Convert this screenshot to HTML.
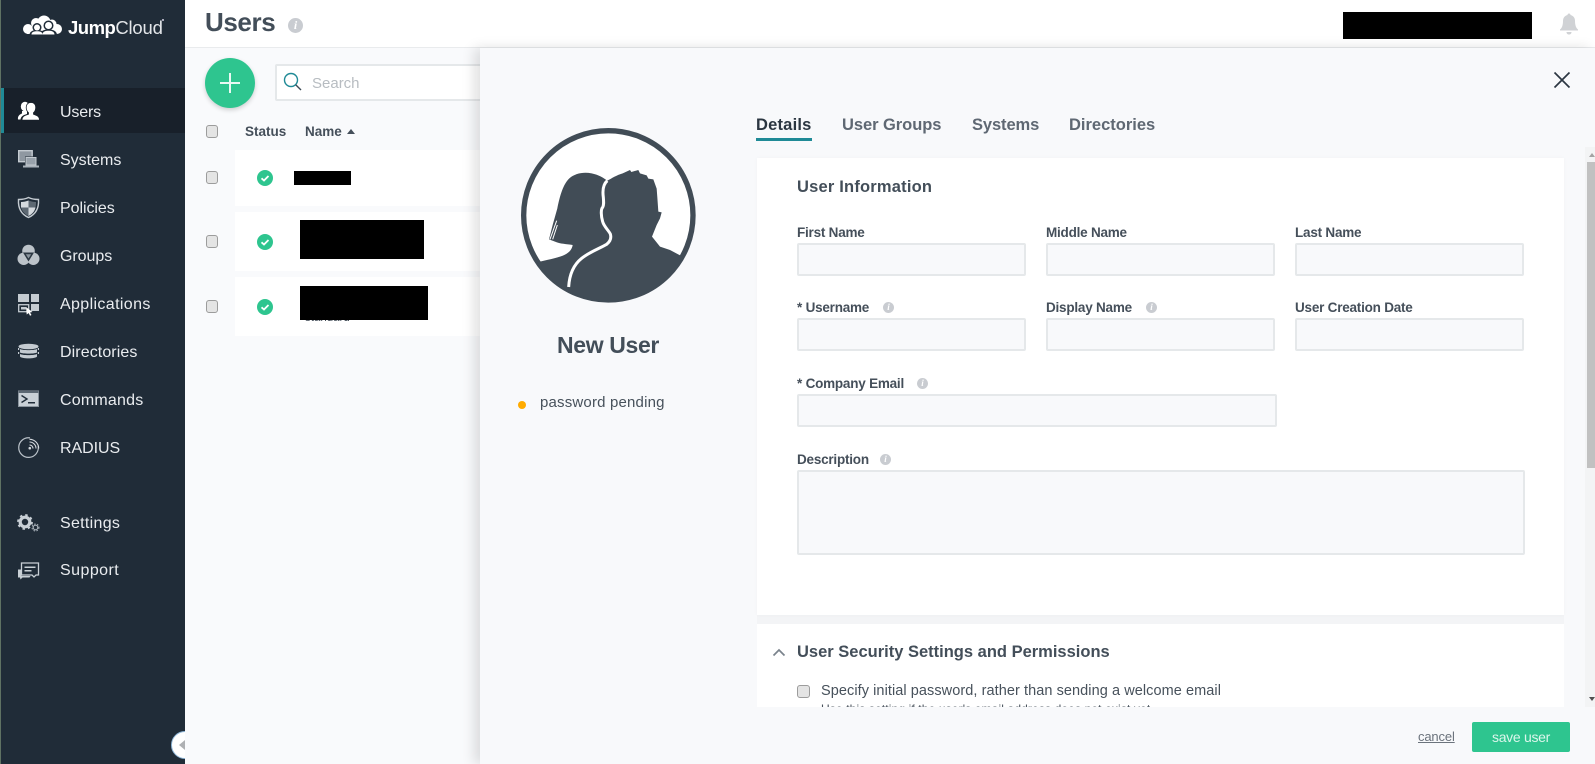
<!DOCTYPE html>
<html><head><meta charset="utf-8"><title>Users</title>
<style>
html,body{margin:0;padding:0;width:1595px;height:764px;overflow:hidden;background:#f9fafc;font-family:"Liberation Sans",sans-serif;color:#3f4a56}
.a{position:absolute}
.t{position:absolute;white-space:nowrap;line-height:20px}
.nav{left:60px;font-size:16px;color:#e9ecef}
.lbl{font-size:13.5px;font-weight:bold;color:#454f5a;letter-spacing:-.22px}
.inp{position:absolute;box-sizing:border-box;background:#f8f9fb;border:2px solid #e5e8ea;border-radius:2px}
.cb{position:absolute;box-sizing:border-box;width:12.500px;height:12.500px;background:#e4e4e4;border:1px solid #9c9c9c;border-radius:3px}
.row{position:absolute;left:235px;width:260px;background:#fff}
.bk{position:absolute;background:#000}
.tab{font-size:16.5px;font-weight:bold;color:#5f6873;top:115px}
.i{position:absolute;border-radius:50%;background:#c9ccd1;color:#fff;font:italic bold 9px/11px "Liberation Serif",serif;text-align:center;width:11px;height:11px}
</style></head><body>

<!-- Sidebar -->
<div class="a" style="left:0;top:0;width:185px;height:764px;background:#202c38"></div>
<div class="a" style="left:0;top:0;width:1px;height:764px;background:#5f7263"></div>
<div class="a" style="left:1px;top:88px;width:184px;height:45px;background:#18202a"></div>
<div class="a" style="left:1px;top:88px;width:3px;height:45px;background:#1f8a96"></div>

<svg class="a" style="left:0;top:0" width="185" height="764" viewBox="0 0 185 764">
  <!-- logo cloud -->
  <g fill="#fff">
    <circle cx="28" cy="29" r="5"/>
    <circle cx="36" cy="23" r="5"/>
    <circle cx="44" cy="22" r="6.500"/>
    <circle cx="52" cy="24" r="4.500"/>
    <circle cx="57" cy="29" r="5"/>
    <rect x="27" y="26" width="30" height="8"/>
  </g>
  <g fill="#202c38">
    <circle cx="37" cy="27.500" r="4.500"/><circle cx="48.500" cy="25.500" r="5"/>
    <path d="M29.500 35c0-3.500 3.500-5 7.500-5s7.500 1.500 7.500 5zM40 35c0-4 4-5.500 8.500-5.500S57 31 57 35z"/>
  </g>
  <g fill="#fff">
    <circle cx="37" cy="27.500" r="3"/><circle cx="48.500" cy="25.500" r="3.500"/>
    <path d="M31.500 34.500c0-2.500 2.500-3.200 5.500-3.200s5.500.7 5.500 3.200zM42.500 34.500c0-2.800 3-3.700 6-3.700s6 .9 6 3.700z"/>
  </g>
  <!-- users -->
  <ellipse cx="25" cy="106.500" rx="4.200" ry="4.700" fill="#fff"/>
  <path fill="#fff" d="M22 111h5v3c-3 .8-6 2-6.500 5.500H18c-.5-3.500 1.500-5 4-6z"/>
  <path fill="#fff" stroke="#18202a" stroke-width=".8" d="M31 102.500c3 0 4.700 2 4.700 4.700 0 2.500-1 4.500-2.200 5.500v1.500c3 1 6 2 6 6H22c0-4 3-5 6.500-6v-1.500c-1.200-1-2.300-3-2.300-5.500 0-2.700 1.800-4.700 4.800-4.700z"/>
  <!-- systems -->
  <rect x="18.700" y="150.700" width="13.500" height="11" fill="#8f98a1" stroke="#c4cbd1" stroke-width="1.400"/>
  <rect x="25" y="156.500" width="12" height="9" fill="#202c38"/>
  <rect x="26" y="157.500" width="10" height="7.500" fill="#98a2ab" stroke="#c4cbd1" stroke-width="1"/>
  <rect x="23" y="165.500" width="16" height="2" fill="#aab3bb"/>
  <!-- policies -->
  <path d="M28.500 197.500c3 1.500 7 2 10 2 .5 8-2 14.500-10 18-8-3.500-10.500-10-10-18 3 0 7-.5 10-2z" fill="none" stroke="#c4cbd1" stroke-width="1.400"/>
  <path d="M28.500 200.500v7h-7.500c-.2-2 0-4 0-5.500 2.500 0 5-.5 7.500-1.500zM28.500 207.500h7c-.7 3.500-3 6.500-7 8.500z" fill="#d4d9dd"/>
  <path d="M28.500 200.500c2.500 1 5 1.500 7.500 1.500 0 1.500 0 3.500-.500 5.500h-7zM21 207.500h7.500v8.500c-4-2-6.500-5-7.500-8.500z" fill="#5d6872"/>
  <!-- groups -->
  <circle cx="28.500" cy="251" r="6.300" fill="#bcc3c9"/>
  <circle cx="23.700" cy="258.800" r="6.200" fill="#bcc3c9"/>
  <circle cx="33.300" cy="258.800" r="6.200" fill="#bcc3c9"/>
  <path d="M23 252.500h11l-5.500 9z" fill="#2b3742"/>
  <path d="M25.800 254.200h5.400l-2.700 4.300z" fill="#8b959e"/>
  <!-- applications -->
  <g fill="#c4cbd1">
    <rect x="18" y="294" width="11" height="8"/><rect x="31" y="294" width="8" height="8"/>
    <rect x="31" y="304" width="8" height="7"/>
  </g>
  <rect x="18.700" y="304.700" width="10" height="7" fill="none" stroke="#c4cbd1" stroke-width="1.300"/>
  <rect x="21" y="307" width="5" height="2.500" fill="#c4cbd1"/>
  <path d="M26 307l6.500 5-2.500.5 1.500 2.500-1.500.7-1.300-2.600-2 1.400z" fill="#fff"/>
  <!-- directories -->
  <g fill="#c4cbd1">
    <ellipse cx="28.500" cy="346.500" rx="10" ry="2.800"/>
    <path d="M20 349c2.500 1.500 14.500 1.500 17 0v3.500c-2.500 1.500-14.500 1.500-17 0z"/>
    <path d="M20 354c2.500 1.500 14.500 1.500 17 0v2.500c-1.500 2.500-15.500 2.500-17 0z"/>
    <rect x="18" y="348" width="1.200" height="2"/><rect x="37.800" y="348" width="1.200" height="2"/>
    <rect x="18" y="352" width="1.200" height="2"/><rect x="37.800" y="352" width="1.200" height="2"/>
  </g>
  <!-- commands -->
  <rect x="18.500" y="391" width="20" height="15.500" fill="#c9d0d6" stroke="#8b959e" stroke-width="1"/>
  <rect x="18.500" y="391" width="20" height="2" fill="#5c6873"/>
  <path d="M21.500 395.500l5.500 3.500-5.500 3.500" fill="none" stroke="#202c38" stroke-width="1.400"/>
  <rect x="28" y="402" width="7" height="1.500" fill="#202c38"/>
  <!-- radius -->
  <path d="M30 437.900A9.800 9.800 0 1 0 38.200 446" fill="none" stroke="#b9c1c8" stroke-width="1.200"/>
  <g fill="none" stroke="#d5dadf" stroke-width="1.100">
    <path d="M29.500 445a3.500 3.500 0 0 1 3.500 3.500"/>
    <path d="M29.500 442a6.500 6.500 0 0 1 6.500 6.500"/>
    <path d="M29.500 439.300a9.200 9.200 0 0 1 9.200 9.200"/>
  </g>
  <circle cx="29.800" cy="448.200" r="1.300" fill="#d5dadf"/>
  <!-- settings -->
  <circle cx="25" cy="522" r="4.800" fill="none" stroke="#c9d0d6" stroke-width="3.200"/>
  <circle cx="25" cy="522" r="7" fill="none" stroke="#c9d0d6" stroke-width="1.800" stroke-dasharray="2.500 3"/>
  <circle cx="35.500" cy="527.500" r="2.300" fill="none" stroke="#a7b0b8" stroke-width="1.200"/>
  <circle cx="35.500" cy="527.500" r="3.500" fill="none" stroke="#a7b0b8" stroke-width="1" stroke-dasharray="1.500 1.500"/>
  <!-- support -->
  <g transform="translate(0 1)">
  <path d="M21.500 562h17v12h-2.500l-2 2-2-2h-10.500z" fill="none" stroke="#c9d0d6" stroke-width="1.300"/>
  <path d="M24.500 565.500h11v1.500h-11zM24.500 569h7v1.500h-7z" fill="#c9d0d6"/>
  <path d="M18 568.500h3.500v6.500h9l-1 1.500h-7l-2 2-.5-2h-2z" fill="#c9d0d6"/>
  </g>
</svg>

<div class="t" style="left:68px;top:17px;font-size:18.500px;line-height:22px;color:#fff;letter-spacing:-.2px"><span style="font-weight:bold;letter-spacing:-.5px">Jump</span><span style="color:#e3e6e9">Cloud</span></div>
<div class="a" style="left:162px;top:19px;width:1.500px;height:1.500px;background:#aab"></div>

<div class="t nav" style="top:103px;letter-spacing:-.15px">Users</div>
<div class="t nav" style="top:151px;letter-spacing:0">Systems</div>
<div class="t nav" style="top:199px;letter-spacing:-.05px">Policies</div>
<div class="t nav" style="top:247px;letter-spacing:-.05px">Groups</div>
<div class="t nav" style="top:295px;letter-spacing:.37px">Applications</div>
<div class="t nav" style="top:343px;letter-spacing:.09px">Directories</div>
<div class="t nav" style="top:391px;letter-spacing:.2px">Commands</div>
<div class="t nav" style="top:439px;letter-spacing:-.05px">RADIUS</div>
<div class="t nav" style="top:514px;letter-spacing:.3px">Settings</div>
<div class="t nav" style="top:561px;letter-spacing:.45px">Support</div>

<!-- collapse tab -->
<div class="a" style="left:171px;top:731px;width:14px;height:28px;overflow:hidden">
  <div class="a" style="left:0;top:0;width:28px;height:28px;box-sizing:border-box;border-radius:50%;background:#fff;border:1px solid #8fb7d8"></div>
  <div class="a" style="left:8px;top:9px;width:0;height:0;border-top:5px solid transparent;border-bottom:5px solid transparent;border-right:6px solid #aeb0b3"></div>
</div>

<!-- Header -->
<div class="a" style="left:185px;top:0;width:1410px;height:47px;background:#fff;border-bottom:1px solid #e9ebed"></div>
<div class="t" style="left:205px;top:6px;font-size:26px;line-height:32px;font-weight:bold;color:#434e59;letter-spacing:-.4px">Users</div>
<div class="i" style="left:288px;top:18px;width:15px;height:15px;font-size:12px;line-height:15px">i</div>
<div class="bk" style="left:1343px;top:12px;width:189px;height:27px"></div>
<svg class="a" style="left:1558px;top:12px" width="22" height="24" viewBox="0 0 22 24">
  <path d="M11 1.500c1 0 1.500.7 1.500 1.500 3 .8 4.500 3 4.500 6 0 4 1 7 3 8.500v1H2v-1c2-1.500 3-4.500 3-8.500 0-3 1.500-5.200 4.500-6 0-.8.500-1.500 1.500-1.500z" fill="#d0d2d5"/>
  <path d="M8.500 20h5c0 1.500-1 2.500-2.500 2.500S8.500 21.500 8.500 20z" fill="#d0d2d5"/>
</svg>

<!-- Users list -->
<div class="a" style="left:205px;top:58px;width:50px;height:50px;border-radius:50%;background:#2ec58f;box-shadow:0 2px 5px rgba(0,0,0,.18)"></div>
<div class="a" style="left:229px;top:73px;width:2px;height:20px;background:#e9f9f3"></div>
<div class="a" style="left:220px;top:82px;width:20px;height:2px;background:#e9f9f3"></div>
<div class="a" style="left:275px;top:64px;width:230px;height:37px;box-sizing:border-box;background:#fff;border:2px solid #e5e8ea;border-radius:2px"></div>
<svg class="a" style="left:283px;top:72px" width="20" height="20" viewBox="0 0 20 20"><circle cx="8" cy="8" r="6.500" fill="none" stroke="#1f8a96" stroke-width="1.400"/><path d="M12.700 12.700l5.300 5.300" stroke="#3c4a55" stroke-width="1.400"/></svg>
<div class="t" style="left:312px;top:74px;font-size:15px;color:#b7bcc1;letter-spacing:0">Search</div>

<div class="cb" style="left:205.500px;top:125px"></div>
<div class="t" style="left:245px;top:122px;font-size:13.500px;font-weight:bold;color:#454f5a">Status</div>
<div class="t" style="left:305px;top:122px;font-size:13.500px;font-weight:bold;color:#454f5a">Name</div>
<div class="a" style="left:347px;top:129px;width:0;height:0;border-left:4.500px solid transparent;border-right:4.500px solid transparent;border-bottom:5px solid #454f5a"></div>

<div class="row" style="top:150px;height:56px"></div>
<div class="row" style="top:212px;height:59px"></div>
<div class="row" style="top:277px;height:59px"></div>
<div class="cb" style="left:205.500px;top:171px"></div>
<div class="cb" style="left:205.500px;top:235px"></div>
<div class="cb" style="left:205.500px;top:300px"></div>

<svg class="a" style="left:257px;top:170px" width="16" height="16" viewBox="0 0 16 16"><circle cx="8" cy="8" r="8" fill="#2ec58f"/><path d="M4.500 8.300l2.500 2.200 4.500-4.500" fill="none" stroke="#fff" stroke-width="1.800"/></svg>
<svg class="a" style="left:257px;top:234px" width="16" height="16" viewBox="0 0 16 16"><circle cx="8" cy="8" r="8" fill="#2ec58f"/><path d="M4.500 8.300l2.500 2.200 4.500-4.500" fill="none" stroke="#fff" stroke-width="1.800"/></svg>
<svg class="a" style="left:257px;top:299px" width="16" height="16" viewBox="0 0 16 16"><circle cx="8" cy="8" r="8" fill="#2ec58f"/><path d="M4.500 8.300l2.500 2.200 4.500-4.500" fill="none" stroke="#fff" stroke-width="1.800"/></svg>

<div class="bk" style="left:294px;top:171px;width:57px;height:14px"></div>
<div class="bk" style="left:300px;top:220px;width:124px;height:39px"></div>
<div class="t" style="left:305px;top:308px;font-size:11.500px;color:#454f5a">standard</div>
<div class="bk" style="left:300px;top:286px;width:128px;height:34px"></div>

<!-- Panel -->
<div class="a" style="left:480px;top:48px;width:1115px;height:716px;background:#f8f9fb;box-shadow:-6px 0 12px rgba(0,0,0,.12)"></div>

<svg class="a" style="left:500px;top:110px" width="240" height="310" viewBox="0 0 720 930">
  <defs><clipPath id="c"><circle cx="325" cy="316" r="255"/></clipPath></defs>
  <circle cx="325" cy="316" r="254" fill="#fff" stroke="#414c56" stroke-width="16"/>
  <path clip-path="url(#c)" fill="#414c56" d="M90 600V462L120 455C150 448 180 442 195 434C208 427 216 418 218 405C200 402 180 402 165 395L147 388L158 345L172 295C180 255 190 222 208 205C225 190 250 185 275 190C295 194 310 203 322 212C335 205 350 195 368 190L390 180L394 186L415 180L420 190L440 196L445 206L460 208L465 222L470 236L472 262L475 305L485 307L480 325L470 345L456 380L480 410L510 420L542 437L600 470V600Z"/>
  <path d="M150 388L170 332M158 388L172 345" stroke="#fff" stroke-width="3" fill="none"/>
  <path d="M322 212C310 222 307 240 310 262C311 275 312 285 308 292C302 298 303 318 308 335C312 350 325 360 331 372C335 385 330 395 320 403C300 415 270 425 245 445C220 465 208 495 206 531" fill="none" stroke="#fff" stroke-width="9"/>
</svg>

<div class="t" style="left:557px;top:331px;font-size:23px;line-height:28px;font-weight:bold;color:#434e59;letter-spacing:-.35px">New User</div>
<div class="a" style="left:518px;top:401px;width:8px;height:8px;border-radius:50%;background:#ffab00"></div>
<div class="t" style="left:540px;top:393px;font-size:15px;color:#47515b;letter-spacing:.18px">password pending</div>

<!-- close -->
<svg class="a" style="left:1553px;top:71px" width="18" height="18" viewBox="0 0 18 18"><path d="M1.500 1.500l15 15M16.500 1.500l-15 15" stroke="#2c3742" stroke-width="1.700"/></svg>

<!-- tabs -->
<div class="t tab" style="left:756px;color:#2b3641;letter-spacing:.2px">Details</div>
<div class="a" style="left:756px;top:138px;width:56px;height:3px;background:#1f8a96"></div>
<div class="t tab" style="left:842px;letter-spacing:-.05px">User Groups</div>
<div class="t tab" style="left:972px;letter-spacing:-.1px">Systems</div>
<div class="t tab" style="left:1069px">Directories</div>

<!-- scroll area -->
<div class="a" style="left:757px;top:615px;width:807px;height:9px;background:#f3f4f6"></div>
<div class="a" style="left:757px;top:158px;width:807px;height:457px;background:#fff;box-shadow:0 0 4px rgba(0,0,0,.03)"></div>
<div class="a" style="left:757px;top:624px;width:807px;height:83px;background:#fff;overflow:hidden">
  <svg class="a" style="left:15px;top:24px" width="14" height="9" viewBox="0 0 14 9"><path d="M1.500 7.500L7 2l5.500 5.500" fill="none" stroke="#7a838c" stroke-width="1.700"/></svg>
  <div class="t" style="left:40px;top:18px;font-size:16.500px;font-weight:bold;color:#434e59">User Security Settings and Permissions</div>
  <div class="cb" style="left:40px;top:61px"></div>
  <div class="t" style="left:64px;top:57px;font-size:14.500px;color:#47515b;letter-spacing:.07px">Specify initial password, rather than sending a welcome email</div>
  <div class="t" style="left:64px;top:75px;font-size:12px;color:#47515b;letter-spacing:.13px">Use this setting if the user's email address does not exist yet</div>
</div>

<div class="t" style="left:797px;top:177px;font-size:16.500px;font-weight:bold;color:#434e59;letter-spacing:.2px">User Information</div>

<div class="t lbl" style="left:797px;top:223px">First Name</div>
<div class="t lbl" style="left:1046px;top:223px">Middle Name</div>
<div class="t lbl" style="left:1295px;top:223px">Last Name</div>
<div class="inp" style="left:797px;top:243px;width:229px;height:33px"></div>
<div class="inp" style="left:1046px;top:243px;width:229px;height:33px"></div>
<div class="inp" style="left:1295px;top:243px;width:229px;height:33px"></div>

<div class="t lbl" style="left:797px;top:298px">* Username</div>
<div class="i" style="left:883px;top:301.500px">i</div>
<div class="t lbl" style="left:1046px;top:298px">Display Name</div>
<div class="i" style="left:1146px;top:301.500px">i</div>
<div class="t lbl" style="left:1295px;top:298px">User Creation Date</div>
<div class="inp" style="left:797px;top:318px;width:229px;height:33px"></div>
<div class="inp" style="left:1046px;top:318px;width:229px;height:33px"></div>
<div class="inp" style="left:1295px;top:318px;width:229px;height:33px"></div>

<div class="t lbl" style="left:797px;top:374px">* Company Email</div>
<div class="i" style="left:917px;top:377.500px">i</div>
<div class="inp" style="left:797px;top:394px;width:480px;height:33px"></div>

<div class="t lbl" style="left:797px;top:450px">Description</div>
<div class="i" style="left:880px;top:453.500px">i</div>
<div class="inp" style="left:797px;top:470px;width:728px;height:85px"></div>

<!-- scrollbar -->
<div class="a" style="left:1585px;top:147px;width:10px;height:560px;background:#f3f4f5"></div>
<div class="a" style="left:1587px;top:162px;width:8px;height:306px;background:#c1c1c1"></div>
<div class="a" style="left:1589px;top:153px;width:0;height:0;border-left:3px solid transparent;border-right:3px solid transparent;border-bottom:4px solid #a3a3a3"></div>
<div class="a" style="left:1589px;top:697px;width:0;height:0;border-left:3px solid transparent;border-right:3px solid transparent;border-top:4px solid #505050"></div>

<!-- footer -->
<div class="t" style="left:1418px;top:727px;font-size:13px;color:#6b737c;text-decoration:underline;letter-spacing:-.15px">cancel</div>
<div class="a" style="left:1472px;top:722px;width:98px;height:30px;background:#2ec58f;border-radius:2px;color:#dcf6ec;font-size:14px;line-height:30px;text-align:center;letter-spacing:-.3px">save user</div>

</body></html>
